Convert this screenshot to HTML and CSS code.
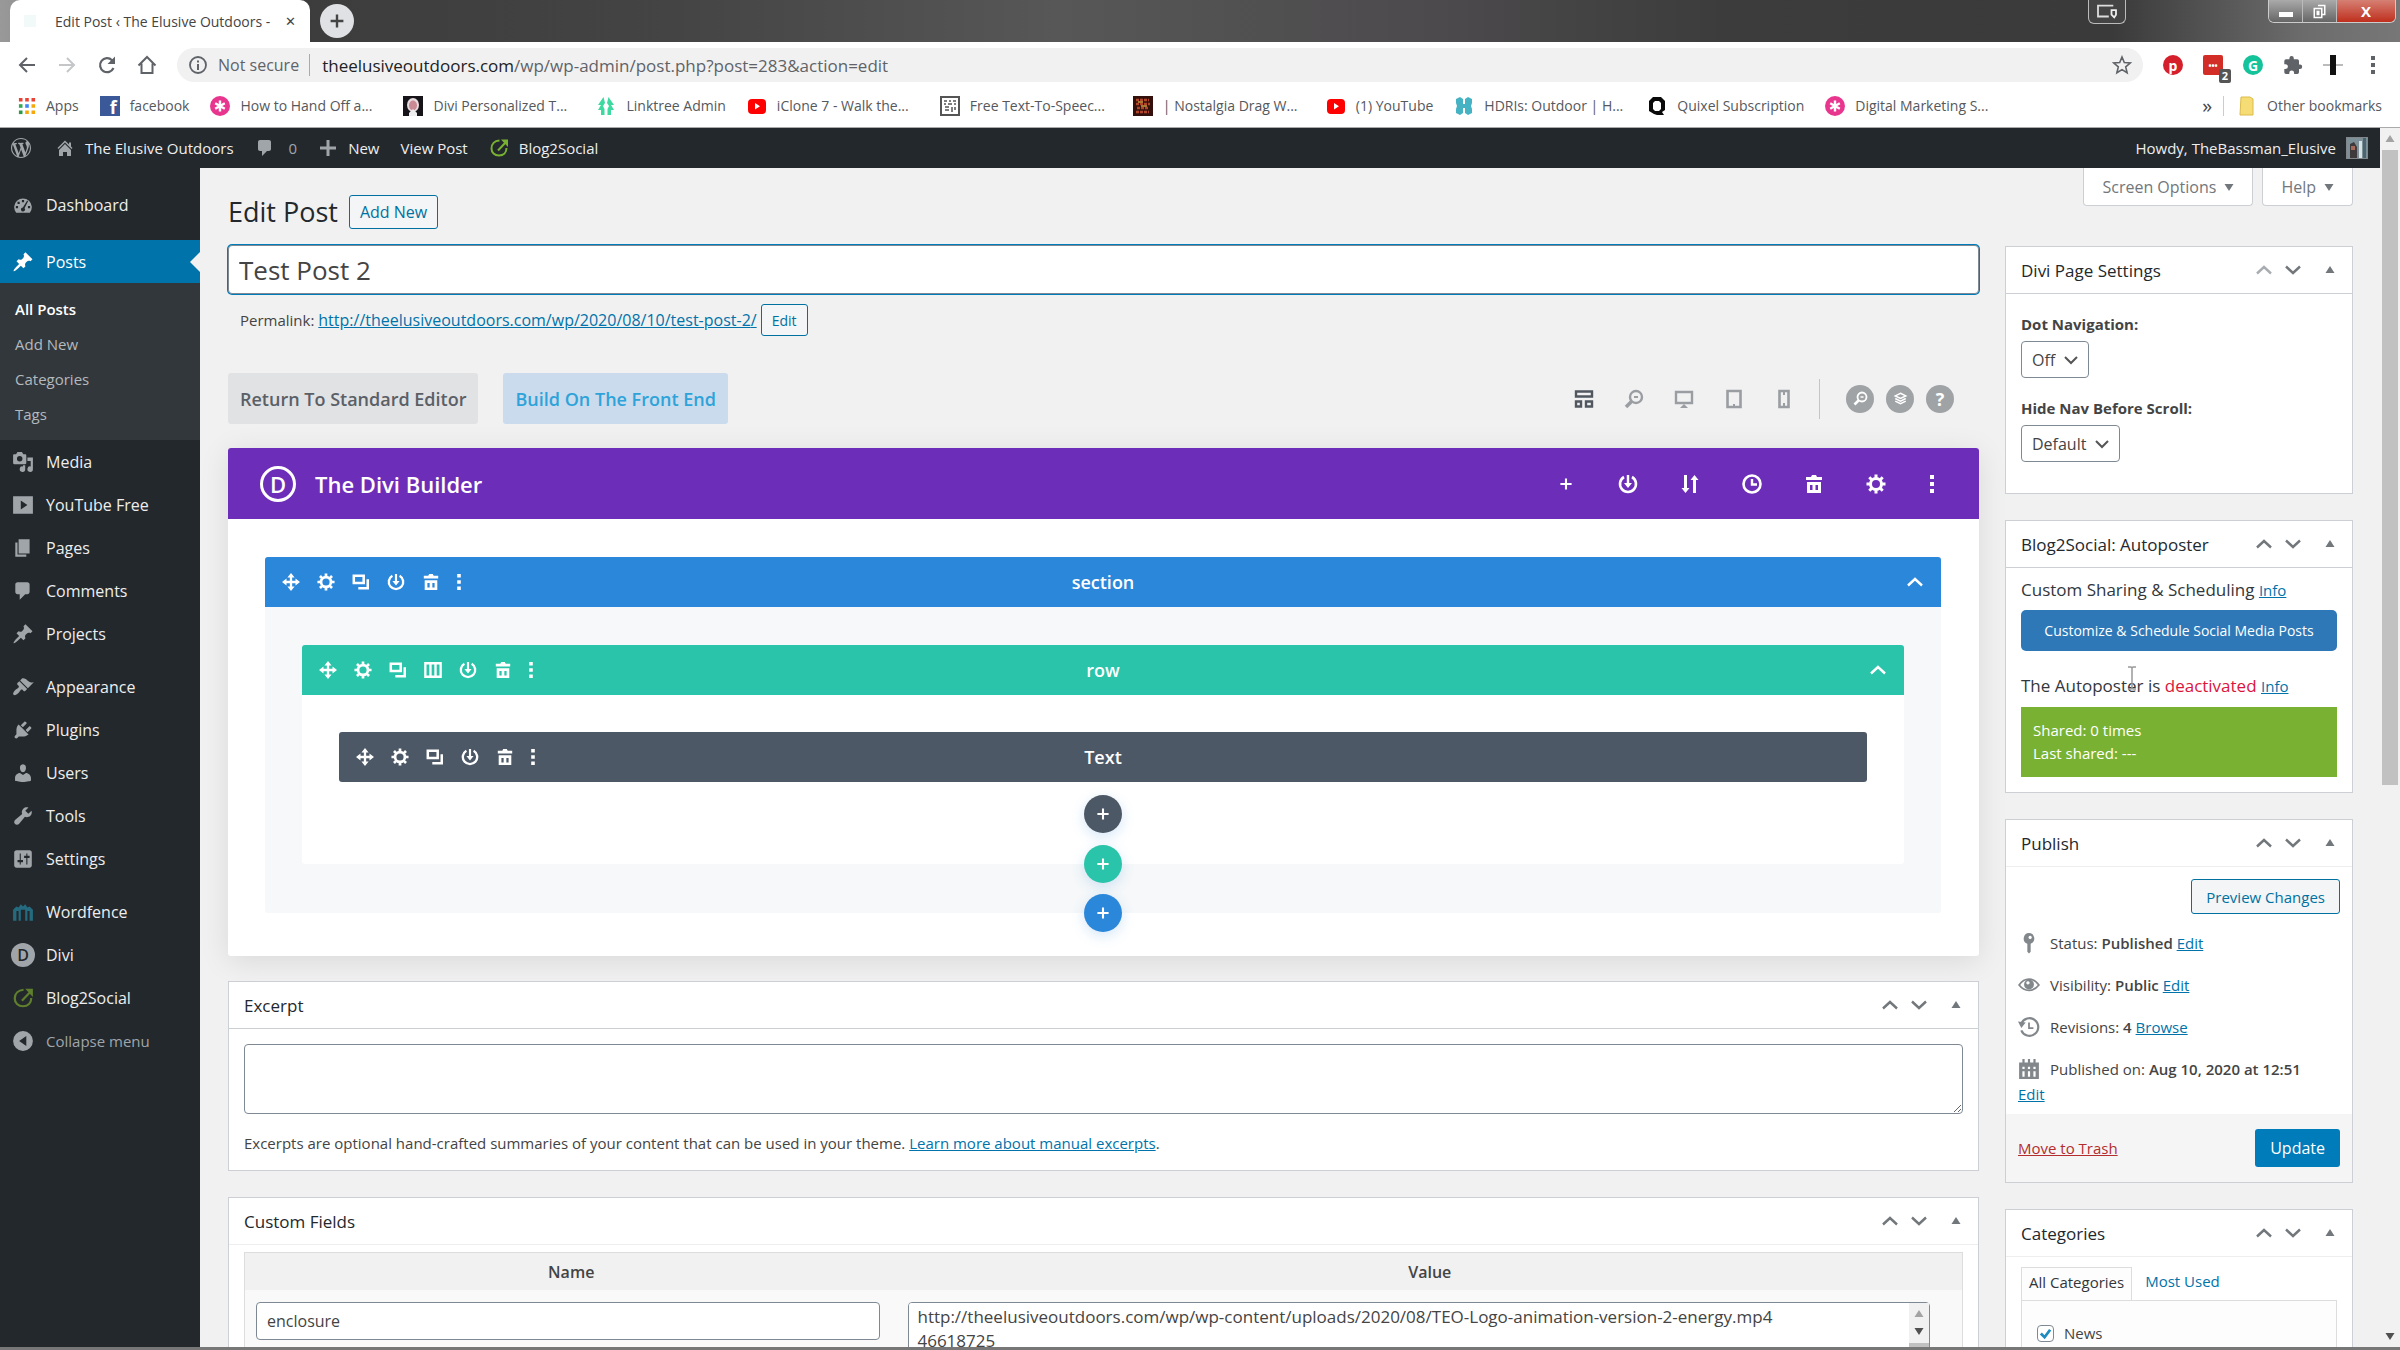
FILE: index.html
```html
<!DOCTYPE html>
<html lang="en">
<head>
    <meta charset="UTF-8">
    <meta name="viewport" content="width=device-width, initial-scale=1.0">
    <title>Edit Post ‹ The Elusive Outdoors</title>
    <link rel="stylesheet" href="styles.css">
</head>
<body>
    <!-- icon set -->
    <svg class="sprite" aria-hidden="true">
        <symbol id="i-back" viewBox="0 0 20 20"><path d="M18 10H3M10 3l-7 7 7 7" fill="none" stroke="currentColor" stroke-width="2"/></symbol>
        <symbol id="i-forward" viewBox="0 0 20 20"><path d="M2 10h15M10 3l7 7-7 7" fill="none" stroke="currentColor" stroke-width="2"/></symbol>
        <symbol id="i-reload" viewBox="0 0 20 20"><path d="M16.5 13A7 7 0 1 1 15 5.2l1.500 1.600" fill="none" stroke="currentColor" stroke-width="2.200"/><path d="M18 1.500V9h-7.500z" fill="currentColor"/></symbol>
        <symbol id="i-house" viewBox="0 0 20 20"><path d="M1.500 10.500L10 2l8.500 8.500M4.500 8.500V18h11V8.500" fill="none" stroke="currentColor" stroke-width="2"/></symbol>
        <symbol id="i-info" viewBox="0 0 20 20"><circle cx="10" cy="10" r="8" fill="none" stroke="currentColor" stroke-width="1.800"/><path d="M9 9h2v6H9zM9 5.500h2v2H9z" fill="currentColor"/></symbol>
        <symbol id="i-star" viewBox="0 0 20 20"><path d="M10 2l2.300 5.500 5.900.5-4.500 3.900 1.400 5.800L10 14.600l-5.100 3.100 1.400-5.800L1.800 8l5.900-.5z" fill="none" stroke="currentColor" stroke-width="1.600"/></symbol>
        <symbol id="i-puzzle" viewBox="0 0 20 20"><path d="M17 9.500h-1V6a1.700 1.700 0 0 0-1.700-1.700h-3.500V3.200a2.200 2.200 0 0 0-4.400 0v1.100H3A1.700 1.700 0 0 0 1.300 6v3.200h1.200a2.400 2.400 0 0 1 0 4.800H1.300v3.300A1.700 1.700 0 0 0 3 19h3.300v-1.200a2.400 2.400 0 0 1 4.800 0V19h3.200a1.700 1.700 0 0 0 1.700-1.700v-3.400h1a2.200 2.200 0 0 0 0-4.400z" fill="currentColor"/></symbol>
        <symbol id="i-dots" viewBox="0 0 6 20"><path d="M1 1h4v4H1zM1 8h4v4H1zM1 15h4v4H1z" fill="currentColor"/></symbol>
        <symbol id="i-apps" viewBox="0 0 20 20"><path d="M1 1h4v4H1zM8 1h4v4H8zM15 1h4v4h-4z" fill="#e94335"/><path d="M1 8h4v4H1z" fill="#34a853"/><path d="M8 8h4v4H8z" fill="#4285f4"/><path d="M15 8h4v4h-4zM8 15h4v4H8zM15 15h4v4h-4z" fill="#f4a80c"/><path d="M1 15h4v4H1z" fill="#2d9a48"/></symbol>
        <symbol id="i-asterisk" viewBox="0 0 20 20"><circle cx="10" cy="10" r="10" fill="#e8368f"/><path d="M10 4.500v11M5.200 7.200l9.600 5.600M14.800 7.200l-9.600 5.600" stroke="#fff" stroke-width="2.400"/></symbol>
        <symbol id="i-portrait" viewBox="0 0 20 20"><path d="M0 0h20v20H0z" fill="#161418"/><ellipse cx="10" cy="9" rx="6" ry="7" fill="#e7dcdf"/><ellipse cx="10" cy="9.500" rx="4" ry="5" fill="#c98a93"/><path d="M6 17l4-4 4 4v3H6z" fill="#eee"/></symbol>
        <symbol id="i-linktree" viewBox="0 0 20 20"><path d="M7.500 1L2 9h3l-3 5h3v5h3.500v-6L7 10l2-3zM12.500 1L18 9h-3l3 5h-3v5h-3.500v-6l1.500-3-2-3z" fill="#3ed9a0"/></symbol>
        <symbol id="i-youtube" viewBox="0 0 20 20"><rect y="3" x="1" width="18" height="15" rx="4" fill="#f00"/><path d="M8 7v6.500l5-3.200z" fill="#fff"/></symbol>
        <symbol id="i-speech" viewBox="0 0 20 20"><rect x="1" y="1" width="18" height="18" fill="#fff" stroke="#555" stroke-width="2"/><path d="M4 5h3M9 5h2M13 5h3M4 8h2M8 8h4M14 8h2M5 11h4M12 11v5M15 11v3M5 14h4" stroke="#555" stroke-width="1.500"/></symbol>
        <symbol id="i-drag" viewBox="0 0 20 20"><path d="M0 0h20v20H0z" fill="#33100c"/><path d="M3 4h13M3 8h14M4 12h12M3 16h13" stroke="#b0452a" stroke-width="2.400" stroke-dasharray="3 1"/><path d="M8 10h6M5 6h5" stroke="#c69b3c" stroke-width="1.500"/></symbol>
        <symbol id="i-hdri" viewBox="0 0 20 20"><path d="M2 3l4-2 3 2v5h2V3l3-2 4 2v4l-1 3 1 3v4l-4 2-3-2v-5H9v5l-3 2-4-2v-4l1-3-1-3z" fill="#45b3c4"/></symbol>
        <symbol id="i-quixel" viewBox="0 0 20 20"><path d="M6 1h8l4 4v9l-3 2 2 3h-7l-3-1-5-3V5zM8 5L6 7v6l2 2h4l2-2V7l-2-2z" fill="#0a0a0a" fill-rule="evenodd"/></symbol>
        <symbol id="i-folder" viewBox="0 0 20 20"><path d="M4 1h9l3 2v16H3z" fill="#f6dc74" stroke="#dcbb4b"/></symbol>
        <symbol id="i-wp" viewBox="0 0 20 20"><path fill="currentColor" d="M20 10c0-5.51-4.49-10-10-10C4.48 0 0 4.49 0 10c0 5.52 4.48 10 10 10 5.51 0 10-4.48 10-10zM7.78 15.37L4.37 6.22c.55-.02 1.17-.08 1.17-.08.5-.06.44-1.13-.06-1.11 0 0-1.45.11-2.37.11-.18 0-.37 0-.58-.01C4.12 2.69 6.87 1.11 10 1.11c2.33 0 4.45.87 6.05 2.34-.68-.11-1.65.39-1.65 1.58 0 .74.45 1.36.9 2.1.35.61.55 1.36.55 2.46 0 1.49-1.4 5-1.4 5l-3.03-8.37c.54-.02.82-.17.82-.17.5-.05.44-1.25-.06-1.22 0 0-1.44.12-2.38.12-.87 0-2.33-.12-2.33-.12-.5-.03-.56 1.2-.06 1.22l.92.08 1.26 3.41zM17.41 10c.24-.64.74-1.87.43-4.25.7 1.29 1.05 2.71 1.05 4.25 0 3.29-1.73 6.24-4.4 7.78.97-2.59 1.94-5.2 2.92-7.78zM6.1 18.09C3.12 16.65 1.11 13.53 1.11 10c0-1.3.23-2.48.72-3.59C3.25 10.3 4.67 14.2 6.1 18.09zm4.03-6.63l2.58 6.98c-.86.29-1.76.45-2.71.45-.79 0-1.57-.11-2.29-.33.81-2.38 1.62-4.74 2.42-7.1z"/></symbol>
        <symbol id="i-home" viewBox="0 0 20 20"><path fill="currentColor" d="M16 8.500l1.530 1.530-1.060 1.060L10 4.600l-6.470 6.490-1.060-1.060L10 2.500l4 4v-2h2zM10 6.040l6 5.990V18h-4v-4H8v4H4v-5.970z"/></symbol>
        <symbol id="i-comment" viewBox="0 0 20 20"><path fill="currentColor" d="M5 2h9c1.100 0 2 .9 2 2v7c0 1.100-.9 2-2 2h-2l-5 5v-5H5c-1.100 0-2-.9-2-2V4c0-1.100.9-2 2-2z"/></symbol>
        <symbol id="i-plus" viewBox="0 0 20 20"><path fill="currentColor" d="M8.500 2h3v6.500H18v3h-6.500V18h-3v-6.500H2v-3h6.500z"/></symbol>
        <symbol id="i-b2s" viewBox="0 0 20 20"><path d="M10.500 2.500C5.500 2.800 2.500 6 2.500 10.500c0 4 3 7 7.500 7s7.500-3 7.500-7.500" fill="none" stroke="currentColor" stroke-width="2"/><path d="M9 12.500l8-8.500" stroke="currentColor" stroke-width="2"/><path d="M12 1.500h7V9z" fill="currentColor"/></symbol>
        <symbol id="i-dashboard" viewBox="0 0 20 20"><path fill="currentColor" fill-rule="evenodd" d="M3.760 17A8 8 0 1 1 16.240 17zM9 5.500h2v2H9zM5 7h2v2H5zM3.500 11h2v2h-2zM14.500 11h2v2h-2zM13.800 6l.8.600-3.200 6.400a1.800 1.800 0 1 1-1.500-.7z"/></symbol>
        <symbol id="i-pin" viewBox="0 0 20 20"><path fill="currentColor" d="M10.440 3.020l1.820-1.820 6.360 6.350-1.830 1.820c-1.050-.68-2.480-.57-3.410.36l-.75.75c-.92.93-1.040 2.350-.35 3.410l-1.830 1.820-2.410-2.410-2.800 2.790c-.42.42-3.380 2.710-3.800 2.290s1.860-3.390 2.280-3.810l2.790-2.790L4.100 9.360l1.830-1.820c1.050.69 2.480.57 3.400-.36l.75-.75c.93-.92 1.050-2.350.36-3.410z"/></symbol>
        <symbol id="i-media" viewBox="0 0 20 20"><path fill="currentColor" fill-rule="evenodd" d="M13 11V4c0-.55-.45-1-1-1h-1.670L9 1H5L3.670 3H2c-.55 0-1 .45-1 1v7c0 .55.45 1 1 1h10c.55 0 1-.45 1-1zM7 4.500a2.500 2.500 0 1 1 0 5 2.500 2.500 0 0 1 0-5zM14 6h5v10.500a2.500 2.500 0 1 1-2-2.450V9h-3zM10 14.050V13h2v3.500a2.500 2.500 0 1 1-2-2.450z"/></symbol>
        <symbol id="i-video" viewBox="0 0 20 20"><path fill="currentColor" fill-rule="evenodd" d="M1 2h18v16H1zM8 6v8l6-4z"/></symbol>
        <symbol id="i-pages" viewBox="0 0 20 20"><path fill="currentColor" d="M6 15V2h10v13zm-1 1h8v2H3V5h2z"/></symbol>
        <symbol id="i-brush" viewBox="0 0 20 20"><path fill="currentColor" d="M14.480 11.060L7.410 3.990l1.500-1.500c.5-.56 2.300-.47 3.510.32 1.210.8 1.430 1.280 2.910 2.100 1.180.64 2.450 1.260 4.450.85zm-.71.71L6.700 4.700 4.930 6.470c-.39.39-.39 1.020 0 1.410l1.060 1.060c.39.39.39 1.030 0 1.420-.6.6-1.430 1.110-2.210 1.690-.35.26-.7.53-1.010.84C1.430 14.230.4 16.080 1.400 17.070c.99 1 2.840-.03 4.180-1.360.31-.31.58-.66.85-1.020.57-.78 1.080-1.610 1.690-2.210.39-.39 1.020-.39 1.410 0l1.060 1.060c.39.39 1.020.39 1.410 0z"/></symbol>
        <symbol id="i-plug" viewBox="0 0 20 20"><path fill="currentColor" d="M13.110 4.360L9.870 7.600 8 5.730l3.240-3.240c.35-.34 1.050-.2 1.560.32.52.51.66 1.210.31 1.550zm-8 1.770l.91-1.120 9.010 9.010-1.190.84c-.71.71-2.630 1.160-3.820 1.160H6.140L4.900 17.260c-.59.59-1.540.59-2.120 0-.59-.58-.59-1.530 0-2.120l1.240-1.240v-3.880c0-1.130.4-3.190 1.090-3.890zm7.260 3.970l3.240-3.240c.34-.35 1.040-.21 1.550.31.52.51.66 1.210.31 1.550l-3.240 3.250z"/></symbol>
        <symbol id="i-user" viewBox="0 0 20 20"><path fill="currentColor" d="M10 9.250c-2.270 0-2.730-3.440-2.730-3.440C7 4.020 7.820 2 9.970 2c2.160 0 2.980 2.020 2.710 3.810 0 0-.41 3.440-2.680 3.440zm0 2.570L12.720 10c2.390 0 4.520 2.330 4.520 4.530v2.490s-3.650 1.130-7.240 1.130c-3.650 0-7.240-1.130-7.240-1.130v-2.490c0-2.250 1.940-4.480 4.470-4.480z"/></symbol>
        <symbol id="i-wrench" viewBox="0 0 20 20"><path fill="currentColor" d="M16.680 9.770c-1.340 1.340-3.300 1.670-4.950.99l-5.410 6.520c-.99.99-2.590.99-3.580 0s-.99-2.590 0-3.570l6.520-5.420c-.68-1.650-.35-3.610.99-4.950 1.280-1.280 3.120-1.620 4.720-1.060l-2.890 2.890 2.820 2.820 2.860-2.870c.53 1.580.18 3.390-1.080 4.650z"/></symbol>
        <symbol id="i-sliders" viewBox="0 0 20 20"><path fill="currentColor" fill-rule="evenodd" d="M18 16V4c0-1.100-.9-2-2-2H4c-1.100 0-2 .9-2 2v12c0 1.100.9 2 2 2h12c1.100 0 2-.9 2-2zM7 5h1v6h2v2H8v2H7v-2H5v-2h2zM13 5h1v2h2v2h-2v6h-1V9h-2V7h2z"/></symbol>
        <symbol id="i-fence" viewBox="0 0 20 20"><path fill="currentColor" d="M1 8l3-3 2 1 2-3 2 2 2-2 2 3 2-1 3 3v10h-3V9h-2v9h-2V8H8v10H6V9H4v9H1z"/></symbol>
        <symbol id="i-collapse" viewBox="0 0 20 20"><path fill="currentColor" fill-rule="evenodd" d="M10 1a9 9 0 1 1 0 18 9 9 0 0 1 0-18zM13 5.500v9L6.500 10z"/></symbol>
        <symbol id="i-up" viewBox="0 0 20 20"><path d="M3 13.500L10 7l7 6.500" fill="none" stroke="currentColor" stroke-width="2.400"/></symbol>
        <symbol id="i-down" viewBox="0 0 20 20"><path d="M3 6.500l7 6.500 7-6.500" fill="none" stroke="currentColor" stroke-width="2.400"/></symbol>
        <symbol id="i-tri-up" viewBox="0 0 10 10"><path d="M5 1l4.500 7h-9z" fill="currentColor"/></symbol>
        <symbol id="i-tri-down" viewBox="0 0 10 10"><path d="M5 9L.5 2h9z" fill="currentColor"/></symbol>
        <symbol id="i-wireframe" viewBox="0 0 20 20"><path d="M2 2.500h16v5H2zM2 12.500h5v5H2zM12 12.500h6v5h-6z" fill="none" stroke="currentColor" stroke-width="2.400"/></symbol>
        <symbol id="i-zoom" viewBox="0 0 20 20"><circle cx="12" cy="8" r="6" fill="none" stroke="currentColor" stroke-width="2.400"/><path d="M7.500 12.500L2 18" stroke="currentColor" stroke-width="3.500"/><path d="M10 7h4v2h-4z" fill="currentColor"/></symbol>
        <symbol id="i-desktop" viewBox="0 0 20 20"><path d="M2 3h16v11H2z" fill="none" stroke="currentColor" stroke-width="2.400"/><path d="M10 15l4 4H6z" fill="currentColor"/></symbol>
        <symbol id="i-tablet" viewBox="0 0 20 20"><path d="M3.500 2h13v16h-13z" fill="none" stroke="currentColor" stroke-width="2.600"/><path d="M9 15h2v3H9z" fill="currentColor"/></symbol>
        <symbol id="i-phone" viewBox="0 0 20 20"><path d="M5.500 2h9v16h-9z" fill="none" stroke="currentColor" stroke-width="2.600"/><path d="M9 3h2v3H9zM9 14h2v3H9z" fill="currentColor"/></symbol>
        <symbol id="i-layers" viewBox="0 0 20 20"><path d="M10 3l7 3.500-7 3.500-7-3.500zM3 10l7 3.500 7-3.500M3 13.500l7 3.500 7-3.500" fill="none" stroke="currentColor" stroke-width="2"/></symbol>
        <symbol id="i-power" viewBox="0 0 20 20"><path d="M6 3a8 8 0 1 0 8 0" fill="none" stroke="currentColor" stroke-width="2.600"/><path d="M8.800 1h2.400v8H14l-4 5-4-5h2.800z" fill="currentColor"/></symbol>
        <symbol id="i-sort" viewBox="0 0 20 20"><path d="M4 1h3v13h2.500L5.500 19l-4-5H4zM13 19h3V6h2.500l-4-5-4 5H13z" fill="currentColor"/></symbol>
        <symbol id="i-clock" viewBox="0 0 20 20"><circle cx="10" cy="10" r="8.500" fill="none" stroke="currentColor" stroke-width="2.600"/><path d="M10 5v5.500h5" fill="none" stroke="currentColor" stroke-width="2.400"/></symbol>
        <symbol id="i-trash" viewBox="0 0 20 20"><path fill="currentColor" fill-rule="evenodd" d="M8 1h4l1 2h5v3H2V3h5zM3 8h14v11H3zM6 11v5h2.500v-5zM11.500 11v5H14v-5z"/></symbol>
        <symbol id="i-gear" viewBox="0 0 20 20"><circle cx="10" cy="10" r="5.500" fill="none" stroke="currentColor" stroke-width="3"/><path d="M10 .5V4M10 16v3.500M.5 10H4M16 10h3.500M3.300 3.300l2.400 2.400M14.300 14.300l2.400 2.400M16.700 3.300l-2.400 2.400M5.700 14.300l-2.400 2.400" stroke="currentColor" stroke-width="3"/></symbol>
        <symbol id="i-move" viewBox="0 0 20 20"><path fill="currentColor" d="M10 0l4 5h-2.700v3.700H15V6l5 4-5 4v-2.700h-3.700V15H14l-4 5-4-5h2.700v-3.700H5V14l-5-4 5-4v2.700h3.700V5H6z"/></symbol>
        <symbol id="i-copy" viewBox="0 0 20 20"><path d="M2 3h11v8H2zM17.500 7v10H7" fill="none" stroke="currentColor" stroke-width="2.800"/></symbol>
        <symbol id="i-columns" viewBox="0 0 20 20"><path d="M1.500 2.500h17v15h-17zM7.200 2v16M12.800 2v16" fill="none" stroke="currentColor" stroke-width="2.600"/></symbol>
        <symbol id="i-status" viewBox="0 0 20 20"><path fill="currentColor" fill-rule="evenodd" d="M10 1a5 5 0 0 1 1.500 9.700V18L10 19.500 8.500 18v-7.300A5 5 0 0 1 10 1zM11 3.500a1.500 1.500 0 1 0 .1 0z"/></symbol>
        <symbol id="i-eye" viewBox="0 0 20 20"><path d="M1 10c5-7 13-7 18 0-5 6.500-13 6.500-18 0z" fill="none" stroke="currentColor" stroke-width="1.600"/><path fill="currentColor" fill-rule="evenodd" d="M10 5a4.500 4.500 0 1 1 0 9 4.500 4.500 0 0 1 0-9zM9 6.500a1.500 1.500 0 1 0 .1 0z"/></symbol>
        <symbol id="i-revisions" viewBox="0 0 20 20"><path d="M3 7a8 8 0 1 1 0 6" fill="none" stroke="currentColor" stroke-width="2"/><path d="M0 5l7 1-4 5z" fill="currentColor"/><path d="M10 6v5h4" fill="none" stroke="currentColor" stroke-width="1.600"/></symbol>
        <symbol id="i-calendar" viewBox="0 0 20 20"><path fill="currentColor" fill-rule="evenodd" d="M1 4h3V1h2v3h3V1h2v3h3V1h2v3h3v15H1zM4 8v2h2V8zM9 8v2h2V8zM14 8v2h2V8zM4 12v5h2v-5zM9 12v5h2v-5zM14 12v5h2v-5z"/></symbol>
    </svg>

    <!-- browser window -->
    <header class="browser">
        <div class="titlebar">
            <div class="tab">
                <span class="tab-icon"></span>
                <span class="tab-title">Edit Post ‹ The Elusive Outdoors -</span>
                <button class="tab-close" aria-label="Close tab">✕</button>
            </div>
            <button class="new-tab" aria-label="New tab"><svg class="icon"><use href="#i-plus"/></svg></button>
            <div class="window-controls">
                <button class="capture" aria-label="Capture"><svg viewBox="0 0 30 20"><path d="M4 3h18M5 3v12h12" fill="none" stroke="#ddd" stroke-width="2"/><path d="M20 8h5v5l-2 3-3-3z" fill="#444" stroke="#eee" stroke-width="2"/></svg></button>
                <div class="window-buttons">
                    <button class="win-min" aria-label="Minimize"></button>
                    <button class="win-restore" aria-label="Restore"><svg viewBox="0 0 20 20"><path d="M8 2h9v12h-3M3 6h10v12H3zM7 10h2v4H7z" fill="none" stroke="#fff" stroke-width="2"/></svg></button>
                    <button class="win-close" aria-label="Close">X</button>
                </div>
            </div>
        </div>

        <div class="navbar">
            <button class="nav-button" aria-label="Back"><svg class="icon"><use href="#i-back"/></svg></button>
            <button class="nav-button disabled" aria-label="Forward"><svg class="icon"><use href="#i-forward"/></svg></button>
            <button class="nav-button" aria-label="Reload"><svg class="icon"><use href="#i-reload"/></svg></button>
            <button class="nav-button" aria-label="Home"><svg class="icon"><use href="#i-house"/></svg></button>
            <div class="address">
                <svg class="icon"><use href="#i-info"/></svg>
                <span class="secure">Not secure</span>
                <span class="url"><b>theelusiveoutdoors.com</b>/wp/wp-admin/post.php?post=283&amp;action=edit</span>
                <svg class="icon"><use href="#i-star"/></svg>
            </div>
            <div class="extensions">
                <span class="ext pinterest">p</span>
                <span class="ext lastpass">•••<span class="ext-count">2</span></span>
                <span class="ext grammarly">G</span>
                <svg class="icon"><use href="#i-puzzle"/></svg>
                <svg class="icon profile" viewBox="0 0 20 20"><path d="M0 10h20" stroke="#bbb" stroke-width="2"/><path d="M7 0h6v20H7z" fill="#111"/></svg>
                <svg class="icon"><use href="#i-dots"/></svg>
            </div>
        </div>

        <nav class="bookmarks">
            <a href="#"><svg class="icon apps"><use href="#i-apps"/></svg><span>Apps</span></a>
            <a href="#"><span class="facebook">f</span><span>facebook</span></a>
            <a href="#" class="long"><svg class="icon"><use href="#i-asterisk"/></svg><span>How to Hand Off a...</span></a>
            <a href="#" class="long"><svg class="icon"><use href="#i-portrait"/></svg><span>Divi Personalized T...</span></a>
            <a href="#"><svg class="icon"><use href="#i-linktree"/></svg><span>Linktree Admin</span></a>
            <a href="#" class="long"><svg class="icon"><use href="#i-youtube"/></svg><span>iClone 7 - Walk the...</span></a>
            <a href="#" class="long"><svg class="icon"><use href="#i-speech"/></svg><span>Free Text-To-Speec...</span></a>
            <a href="#" class="long"><svg class="icon"><use href="#i-drag"/></svg><span>| Nostalgia Drag W...</span></a>
            <a href="#"><svg class="icon"><use href="#i-youtube"/></svg><span>(1) YouTube</span></a>
            <a href="#" class="long"><svg class="icon"><use href="#i-hdri"/></svg><span>HDRIs: Outdoor | H...</span></a>
            <a href="#"><svg class="icon"><use href="#i-quixel"/></svg><span>Quixel Subscription</span></a>
            <a href="#" class="long"><svg class="icon"><use href="#i-asterisk"/></svg><span>Digital Marketing S...</span></a>
            <button class="more" aria-label="More bookmarks">»</button>
            <a href="#" class="other"><svg class="icon"><use href="#i-folder"/></svg><span>Other bookmarks</span></a>
        </nav>
    </header>

    <div class="viewport">
        <div class="page">
            <nav class="adminbar">
                <a href="#" aria-label="About WordPress"><svg class="icon"><use href="#i-wp"/></svg></a>
                <a href="#" class="site"><svg class="icon"><use href="#i-home"/></svg>The Elusive Outdoors</a>
                <a href="#" class="count"><svg class="icon"><use href="#i-comment"/></svg><span>0</span></a>
                <a href="#"><svg class="icon"><use href="#i-plus"/></svg>New</a>
                <a href="#">View Post</a>
                <a href="#"><svg class="icon green"><use href="#i-b2s"/></svg>Blog2Social</a>
                <a href="#" class="account">Howdy, TheBassman_Elusive
                    <svg class="avatar" viewBox="0 0 20 20"><path d="M0 0h20v20H0z" fill="#7d9098"/><path d="M3 20V6l4-2 3 5v11z" fill="#3f3a3b"/><path d="M12 20V3h3v17z" fill="#d7e2e6"/><path d="M16 0h3v20h-3z" fill="#4c6470"/><path d="M4 8h4v4H4z" fill="#a66a5c"/></svg>
                </a>
            </nav>

            <div class="layout">
                <nav class="adminmenu">
                    <a href="#"><svg class="icon"><use href="#i-dashboard"/></svg>Dashboard</a>
                    <a href="#" class="current"><svg class="icon"><use href="#i-pin"/></svg>Posts</a>
                    <div class="submenu">
                        <a href="#" class="active">All Posts</a>
                        <a href="#">Add New</a>
                        <a href="#">Categories</a>
                        <a href="#">Tags</a>
                    </div>
                    <a href="#"><svg class="icon"><use href="#i-media"/></svg>Media</a>
                    <a href="#"><svg class="icon"><use href="#i-video"/></svg>YouTube Free</a>
                    <a href="#"><svg class="icon"><use href="#i-pages"/></svg>Pages</a>
                    <a href="#"><svg class="icon"><use href="#i-comment"/></svg>Comments</a>
                    <a href="#"><svg class="icon"><use href="#i-pin"/></svg>Projects</a>
                    <a href="#" class="group"><svg class="icon"><use href="#i-brush"/></svg>Appearance</a>
                    <a href="#"><svg class="icon"><use href="#i-plug"/></svg>Plugins</a>
                    <a href="#"><svg class="icon"><use href="#i-user"/></svg>Users</a>
                    <a href="#"><svg class="icon"><use href="#i-wrench"/></svg>Tools</a>
                    <a href="#"><svg class="icon"><use href="#i-sliders"/></svg>Settings</a>
                    <a href="#" class="group"><svg class="icon teal"><use href="#i-fence"/></svg>Wordfence</a>
                    <a href="#"><span class="divi-mark">D</span>Divi</a>
                    <a href="#"><svg class="icon olive"><use href="#i-b2s"/></svg>Blog2Social</a>
                    <button class="collapse"><svg class="icon"><use href="#i-collapse"/></svg>Collapse menu</button>
                </nav>

                <main class="content">
                    <div class="heading">
                        <h1>Edit Post</h1>
                        <a href="#" class="button">Add New</a>
                        <div class="screen-meta">
                            <button>Screen Options <svg><use href="#i-tri-down"/></svg></button>
                            <button>Help <svg><use href="#i-tri-down"/></svg></button>
                        </div>
                    </div>

                    <div class="columns">
                        <div class="main-column">
                            <input type="text" class="post-title" value="Test Post 2" aria-label="Post title">
                            <div class="permalink">
                                <span>Permalink: <a href="#">http://theelusiveoutdoors.com/wp/2020/08/10/<b>test-post-2</b>/</a></span>
                                <button class="button small">Edit</button>
                            </div>

                            <div class="divi-bar">
                                <button class="divi-button">Return To Standard Editor</button>
                                <button class="divi-button blue">Build On The Front End</button>
                                <div class="views">
                                    <button class="on" aria-label="Wireframe view"><svg class="icon"><use href="#i-wireframe"/></svg></button>
                                    <button aria-label="Zoom out view"><svg class="icon"><use href="#i-zoom"/></svg></button>
                                    <button aria-label="Desktop view"><svg class="icon"><use href="#i-desktop"/></svg></button>
                                    <button aria-label="Tablet view"><svg class="icon"><use href="#i-tablet"/></svg></button>
                                    <button aria-label="Phone view"><svg class="icon"><use href="#i-phone"/></svg></button>
                                </div>
                                <div class="helpers">
                                    <button aria-label="Search"><svg class="icon"><use href="#i-zoom"/></svg></button>
                                    <button aria-label="Layers"><svg class="icon"><use href="#i-layers"/></svg></button>
                                    <button aria-label="Help">?</button>
                                </div>
                            </div>

                            <section class="builder">
                                <div class="builder-head">
                                    <span class="divi-logo">D</span>
                                    <h2>The Divi Builder</h2>
                                    <div class="builder-tools">
                                        <button aria-label="Add from library"><svg class="icon thin"><use href="#i-plus"/></svg></button>
                                        <button aria-label="Save to library"><svg class="icon"><use href="#i-power"/></svg></button>
                                        <button aria-label="Portability"><svg class="icon"><use href="#i-sort"/></svg></button>
                                        <button aria-label="History"><svg class="icon"><use href="#i-clock"/></svg></button>
                                        <button aria-label="Clear layout"><svg class="icon"><use href="#i-trash"/></svg></button>
                                        <button aria-label="Settings"><svg class="icon"><use href="#i-gear"/></svg></button>
                                        <button aria-label="More"><svg class="icon dots"><use href="#i-dots"/></svg></button>
                                    </div>
                                </div>
                                <div class="builder-body">
                                    <div class="block section">
                                        <div class="block-head">
                                            <div class="tools">
                                                <button aria-label="Move"><svg class="icon"><use href="#i-move"/></svg></button>
                                                <button aria-label="Settings"><svg class="icon"><use href="#i-gear"/></svg></button>
                                                <button aria-label="Duplicate"><svg class="icon"><use href="#i-copy"/></svg></button>
                                                <button aria-label="Save"><svg class="icon"><use href="#i-power"/></svg></button>
                                                <button aria-label="Delete"><svg class="icon"><use href="#i-trash"/></svg></button>
                                                <button aria-label="More"><svg class="icon dots"><use href="#i-dots"/></svg></button>
                                            </div>
                                            <span>section</span>
                                            <button class="toggle" aria-label="Collapse section"><svg class="icon"><use href="#i-up"/></svg></button>
                                        </div>
                                        <div class="block row">
                                            <div class="block-head">
                                                <div class="tools">
                                                    <button aria-label="Move"><svg class="icon"><use href="#i-move"/></svg></button>
                                                    <button aria-label="Settings"><svg class="icon"><use href="#i-gear"/></svg></button>
                                                    <button aria-label="Duplicate"><svg class="icon"><use href="#i-copy"/></svg></button>
                                                    <button aria-label="Columns"><svg class="icon"><use href="#i-columns"/></svg></button>
                                                    <button aria-label="Save"><svg class="icon"><use href="#i-power"/></svg></button>
                                                    <button aria-label="Delete"><svg class="icon"><use href="#i-trash"/></svg></button>
                                                    <button aria-label="More"><svg class="icon dots"><use href="#i-dots"/></svg></button>
                                                </div>
                                                <span>row</span>
                                                <button class="toggle" aria-label="Collapse row"><svg class="icon"><use href="#i-up"/></svg></button>
                                            </div>
                                            <div class="module">
                                                <div class="block-head">
                                                    <div class="tools">
                                                        <button aria-label="Move"><svg class="icon"><use href="#i-move"/></svg></button>
                                                        <button aria-label="Settings"><svg class="icon"><use href="#i-gear"/></svg></button>
                                                        <button aria-label="Duplicate"><svg class="icon"><use href="#i-copy"/></svg></button>
                                                        <button aria-label="Save"><svg class="icon"><use href="#i-power"/></svg></button>
                                                        <button aria-label="Delete"><svg class="icon"><use href="#i-trash"/></svg></button>
                                                        <button aria-label="More"><svg class="icon dots"><use href="#i-dots"/></svg></button>
                                                    </div>
                                                    <span>Text</span>
                                                </div>
                                            </div>
                                            <button class="add add-module" aria-label="Add module"><svg class="icon"><use href="#i-plus"/></svg></button>
                                            <button class="add add-row" aria-label="Add row"><svg class="icon"><use href="#i-plus"/></svg></button>
                                        </div>
                                        <button class="add add-section" aria-label="Add section"><svg class="icon"><use href="#i-plus"/></svg></button>
                                    </div>
                                </div>
                            </section>

                            <section class="box">
                                <div class="box-head">
                                    <h2>Excerpt</h2>
                                    <button aria-label="Move up"><svg class="icon"><use href="#i-up"/></svg></button>
                                    <button aria-label="Move down"><svg class="icon"><use href="#i-down"/></svg></button>
                                    <button class="fold" aria-label="Toggle panel"><svg><use href="#i-tri-up"/></svg></button>
                                </div>
                                <div class="box-body excerpt">
                                    <textarea aria-label="Excerpt"></textarea>
                                    <p>Excerpts are optional hand-crafted summaries of your content that can be used in your theme. <a href="#">Learn more about manual excerpts</a>.</p>
                                </div>
                            </section>

                            <section class="box">
                                <div class="box-head light">
                                    <h2>Custom Fields</h2>
                                    <button aria-label="Move up"><svg class="icon"><use href="#i-up"/></svg></button>
                                    <button aria-label="Move down"><svg class="icon"><use href="#i-down"/></svg></button>
                                    <button class="fold" aria-label="Toggle panel"><svg><use href="#i-tri-up"/></svg></button>
                                </div>
                                <div class="box-body fields">
                                    <table>
                                        <thead>
                                            <tr><th class="name">Name</th><th>Value</th></tr>
                                        </thead>
                                        <tbody>
                                            <tr>
                                                <td><input type="text" value="enclosure" aria-label="Name"></td>
                                                <td>
                                                    <div class="value">
                                                        <textarea aria-label="Value">http://theelusiveoutdoors.com/wp/wp-content/uploads/2020/08/TEO-Logo-animation-version-2-energy.mp4
46618725
video/mp4
</textarea>
                                                        <div class="value-scroll">
                                                            <svg class="faint"><use href="#i-tri-up"/></svg>
                                                            <svg><use href="#i-tri-down"/></svg>
                                                            <div class="value-thumb"></div>
                                                        </div>
                                                    </div>
                                                </td>
                                            </tr>
                                        </tbody>
                                    </table>
                                </div>
                            </section>
                        </div>

                        <aside class="side-column">
                            <section class="box">
                                <div class="box-head">
                                    <h2>Divi Page Settings</h2>
                                    <button class="faded" aria-label="Move up"><svg class="icon"><use href="#i-up"/></svg></button>
                                    <button aria-label="Move down"><svg class="icon"><use href="#i-down"/></svg></button>
                                    <button class="fold" aria-label="Toggle panel"><svg><use href="#i-tri-up"/></svg></button>
                                </div>
                                <div class="box-body settings">
                                    <label for="dot-nav">Dot Navigation:</label>
                                    <select id="dot-nav"><option>Off</option></select>
                                    <label for="hide-nav">Hide Nav Before Scroll:</label>
                                    <select id="hide-nav"><option>Default</option></select>
                                </div>
                            </section>

                            <section class="box">
                                <div class="box-head">
                                    <h2>Blog2Social: Autoposter</h2>
                                    <button aria-label="Move up"><svg class="icon"><use href="#i-up"/></svg></button>
                                    <button aria-label="Move down"><svg class="icon"><use href="#i-down"/></svg></button>
                                    <button class="fold" aria-label="Toggle panel"><svg><use href="#i-tri-up"/></svg></button>
                                </div>
                                <div class="box-body b2s">
                                    <p><strong>Custom Sharing &amp; Scheduling</strong> <a href="#">Info</a></p>
                                    <button class="b2s-button">Customize &amp; Schedule Social Media Posts</button>
                                    <p><strong>The Autoposter is <span class="red">deactivated</span></strong> <a href="#">Info</a></p>
                                    <div class="shared">Shared: 0 times<br>Last shared: ---</div>
                                    <svg class="cursor" viewBox="0 0 10 24"><path d="M1 1h3l1 1 1-1h3M5 2v20M1 23h3l1-1 1 1h3" fill="none" stroke="#999" stroke-width="1.500"/></svg>
                                </div>
                            </section>

                            <section class="box">
                                <div class="box-head light">
                                    <h2>Publish</h2>
                                    <button aria-label="Move up"><svg class="icon"><use href="#i-up"/></svg></button>
                                    <button aria-label="Move down"><svg class="icon"><use href="#i-down"/></svg></button>
                                    <button class="fold" aria-label="Toggle panel"><svg><use href="#i-tri-up"/></svg></button>
                                </div>
                                <div class="box-body publish">
                                    <button class="button preview">Preview Changes</button>
                                    <p><svg class="icon"><use href="#i-status"/></svg>Status: <strong>Published</strong> <a href="#">Edit</a></p>
                                    <p><svg class="icon"><use href="#i-eye"/></svg>Visibility: <strong>Public</strong> <a href="#">Edit</a></p>
                                    <p><svg class="icon"><use href="#i-revisions"/></svg>Revisions: <strong>4</strong> <a href="#">Browse</a></p>
                                    <p><svg class="icon"><use href="#i-calendar"/></svg>Published on: <strong>Aug 10, 2020 at 12:51</strong> <a href="#">Edit</a></p>
                                </div>
                                <div class="publish-actions">
                                    <a href="#" class="trash">Move to Trash</a>
                                    <button class="update">Update</button>
                                </div>
                            </section>

                            <section class="box">
                                <div class="box-head light">
                                    <h2>Categories</h2>
                                    <button aria-label="Move up"><svg class="icon"><use href="#i-up"/></svg></button>
                                    <button aria-label="Move down"><svg class="icon"><use href="#i-down"/></svg></button>
                                    <button class="fold" aria-label="Toggle panel"><svg><use href="#i-tri-up"/></svg></button>
                                </div>
                                <div class="box-body categories">
                                    <div class="tabs">
                                        <a href="#" class="selected">All Categories</a>
                                        <a href="#">Most Used</a>
                                    </div>
                                    <div class="tab-panel">
                                        <label><input type="checkbox" checked> News</label>
                                    </div>
                                </div>
                            </section>
                        </aside>
                    </div>
                </main>
            </div>
        </div>
        <div class="scrollbar">
            <svg class="faint"><use href="#i-tri-up"/></svg>
            <div class="track"><div class="thumb"></div></div>
            <svg><use href="#i-tri-down"/></svg>
        </div>
    </div>
</body>
</html>
```
FILE: styles.css
```css
*{
    box-sizing: border-box;
}
body{
    margin: 0;
    height: 100vh;
    display: flex;
    flex-direction: column;
    overflow: hidden;
    font-family: "Open Sans", "Noto Sans", sans-serif;
    font-size: 15px;
    color: #444;
    background-color: #fff;
    border-bottom: 3px solid #777;
}
h1, h2, p{
    margin: 0;
}
button, input, select, textarea{
    font-family: inherit;
    font-size: inherit;
    color: inherit;
}
button{
    padding: 0;
    border: none;
    background: none;
}
a{
    color: #0073aa;
}
.sprite{
    display: none;
}
.icon{
    width: 20px;
    height: 20px;
    flex: none;
    display: block;
}

/* browser */
.browser{
    flex: none;
    height: 128px;
    display: flex;
    flex-direction: column;
    border-bottom: 1px solid #aaa;
}
.titlebar{
    flex: none;
    height: 42px;
    display: flex;
    align-items: flex-start;
    padding-left: 10px;
    background: linear-gradient(90deg, #999, #3c3c3c 12%, #444 28%, #575757 44%, #4c4a4c 60%, #3c3c3c 72%, #3a3a3a 88%, #6c6c6c 96%, #777);
}
.tab{
    width: 300px;
    height: 42px;
    display: flex;
    align-items: center;
    padding: 0 14px;
    background-color: #fff;
    border-radius: 10px 10px 0 0;
    font-size: 14px;
}
.tab-icon{
    width: 12px;
    height: 12px;
    margin-right: 19px;
    background-color: #f2faf9;
}
.tab-title{
    flex: 1;
    overflow: hidden;
    white-space: nowrap;
}
.tab-close{
    width: 12px;
    font-size: 13px;
}
.new-tab{
    width: 34px;
    height: 34px;
    margin: 4px 0 0 10px;
    display: flex;
    align-items: center;
    justify-content: center;
    border-radius: 50%;
    background-color: #dfe1e4;
}
.new-tab .icon{
    width: 16px;
    height: 16px;
}
.window-controls{
    margin-left: auto;
    display: flex;
    padding-right: 4px;
    gap: 142px;
}
.capture{
    width: 38px;
    height: 24px;
    padding: 3px;
    border: 1px solid #bbb;
    border-top: none;
    border-radius: 0 0 6px 6px;
    background-color: #444;
}
.capture svg{
    width: 30px;
    height: 18px;
}
.window-buttons{
    display: flex;
    height: 23px;
    border: 1px solid #ccc;
    border-top: none;
    border-radius: 0 0 6px 6px;
    overflow: hidden;
}
.window-buttons button{
    width: 34px;
    display: flex;
    align-items: center;
    justify-content: center;
    border-right: 1px solid #bbb;
    background: linear-gradient(#aaa, #666);
}
.window-buttons .win-close{
    width: 58px;
    border: none;
    color: #fff;
    font-weight: 700;
    background: linear-gradient(#d58074, #bf2f1d);
}
.win-min::before{
    content: "";
    width: 14px;
    height: 5px;
    margin-top: 6px;
    background-color: #fff;
}
.win-restore svg{
    width: 15px;
    height: 15px;
}
.navbar{
    flex: none;
    height: 46px;
    display: flex;
    align-items: center;
    gap: 20px;
    padding: 0 17px;
    color: #5f6368;
}
.disabled{
    color: #c4c6c8;
}
.address{
    flex: 1;
    height: 34px;
    display: flex;
    align-items: center;
    padding: 0 11px;
    border-radius: 17px;
    background-color: #f1f1f2;
    font-size: 17px;
}
.secure{
    margin-left: 10px;
    padding-right: 10px;
    border-right: 1px solid #aaa;
    font-size: 16px;
}
.url{
    flex: 1;
    margin-left: 12px;
}
.url b{
    font-weight: 400;
    color: #202124;
}
.extensions{
    display: flex;
    align-items: center;
    gap: 20px;
}
.ext{
    width: 20px;
    height: 20px;
    position: relative;
    display: flex;
    align-items: center;
    justify-content: center;
    border-radius: 50%;
    color: #fff;
    font-size: 14px;
    font-weight: 700;
}
.pinterest{
    background-color: #d5202c;
}
.lastpass{
    border-radius: 2px;
    background-color: #d32d27;
    font-size: 8px;
}
.grammarly{
    background-color: #15c39a;
}
.ext-count{
    position: absolute;
    right: -8px;
    bottom: -8px;
    padding: 0 3px;
    border-radius: 2px;
    background-color: #555;
    font-size: 11px;
    line-height: 14px;
}
.bookmarks{
    flex: 1;
    display: flex;
    align-items: center;
    gap: 21px;
    padding: 0 18px 4px 18px;
    font-size: 14px;
}
.bookmarks a{
    display: flex;
    align-items: center;
    gap: 10px;
    color: #55585c;
    text-decoration: none;
    white-space: nowrap;
}
.bookmarks .long span{
    width: 142px;
}
.bookmarks .apps{
    width: 18px;
    height: 18px;
}
.facebook{
    width: 20px;
    height: 20px;
    padding-right: 3px;
    background-color: #3b5998;
    color: #fff;
    font-size: 18px;
    font-weight: 700;
    line-height: 22px;
    text-align: right;
}
.more{
    margin-left: auto;
    font-size: 20px;
}
.bookmarks .other{
    margin-left: -10px;
    padding-left: 13px;
    border-left: 1px solid #ccc;
}

/* viewport */
.viewport{
    flex: 1;
    min-height: 0;
    display: flex;
}
.page{
    flex: 1;
    min-width: 0;
    display: flex;
    flex-direction: column;
    overflow: hidden;
    background-color: #f1f1f1;
}
.scrollbar{
    width: 20px;
    display: flex;
    flex-direction: column;
    align-items: center;
    padding: 6px 2px;
    background-color: #f1f1f1;
}
.scrollbar svg, .value-scroll svg{
    width: 10px;
    height: 10px;
    color: #505050;
}
.scrollbar .faint, .value-scroll .faint{
    color: #a3a3a3;
}
.track{
    flex: 1;
    width: 100%;
    padding: 6px 0;
}
.thumb{
    height: 54%;
    background-color: #c1c1c1;
}

/* admin bar */
.adminbar{
    flex: none;
    height: 40px;
    display: flex;
    align-items: center;
    gap: 21px;
    padding: 0 12px 0 11px;
    background-color: #23282d;
}
.adminbar a{
    display: flex;
    align-items: center;
    gap: 10px;
    color: #eee;
    text-decoration: none;
}
.adminbar .icon{
    color: #a0a5aa;
}
.adminbar .site{
    margin-left: 3px;
}
.adminbar .count span{
    padding-left: 4px;
    color: #a0a5aa;
}
.adminbar .green{
    color: #79b232;
}
.adminbar .account{
    margin-left: auto;
}
.avatar{
    width: 22px;
    height: 22px;
    border: 1px solid #82878c;
}

/* admin menu */
.layout{
    flex: 1;
    min-height: 0;
    display: flex;
}
.adminmenu{
    flex: none;
    width: 200px;
    padding-top: 15px;
    background-color: #23282d;
    font-size: 16px;
}
.adminmenu a, .collapse{
    height: 43px;
    display: flex;
    align-items: center;
    gap: 12px;
    padding-left: 12px;
    color: #eee;
    text-decoration: none;
}
.adminmenu .icon{
    width: 22px;
    height: 22px;
    color: #a0a5aa;
}
.adminmenu .group{
    margin-top: 10px;
}
.adminmenu .current{
    position: relative;
    margin-top: 14px;
    color: #fff;
    background-color: #0073aa;
}
.adminmenu .current .icon{
    color: #fff;
}
.current::after{
    content: "";
    position: absolute;
    right: 0;
    top: 50%;
    margin-top: -10px;
    border: 10px solid transparent;
    border-left: none;
    border-right-color: #f1f1f1;
}
.submenu{
    padding: 8px 0 9px;
    background-color: #32373c;
    font-size: 15px;
}
.submenu a{
    height: 35px;
    padding-left: 15px;
    color: #b4b9be;
}
.submenu .active{
    color: #fff;
    font-weight: 600;
}
.adminmenu .teal{
    color: #256b80;
}
.adminmenu .olive{
    color: #5f7f2d;
}
.divi-mark{
    width: 24px;
    height: 24px;
    margin: 0 -1px;
    border-radius: 50%;
    background-color: #a0a5aa;
    color: #23282d;
    font-weight: 600;
    line-height: 24px;
    text-align: center;
}
.adminmenu .collapse{
    width: 100%;
    color: #a0a5aa;
    font-size: 15px;
}

/* content */
.content{
    flex: 1;
    min-width: 0;
    padding: 0 27px 0 28px;
}
.heading{
    height: 77px;
    display: flex;
    align-items: flex-start;
}
.heading h1{
    margin-top: 27px;
    color: #23282d;
    font-size: 27px;
    font-weight: 400;
    line-height: 34px;
}
.button{
    display: inline-flex;
    align-items: center;
    justify-content: center;
    height: 34px;
    padding: 0 10px;
    border: 1px solid #0071a1;
    border-radius: 3px;
    background-color: #f3f5f6;
    color: #0071a1;
    font-size: 16px;
    text-decoration: none;
}
.heading .button{
    margin: 27px 0 0 11px;
    font-weight: 500;
}
.screen-meta{
    margin-left: auto;
    display: flex;
    gap: 9px;
}
.screen-meta button{
    height: 38px;
    display: flex;
    align-items: center;
    gap: 8px;
    padding: 0 18px;
    border: 1px solid #ccd0d4;
    border-top: none;
    border-radius: 0 0 4px 4px;
    background-color: #fff;
    color: #72777c;
    font-size: 16px;
}
.screen-meta svg{
    width: 10px;
    height: 10px;
}
.columns{
    display: flex;
    align-items: flex-start;
    gap: 26px;
}
.main-column{
    flex: 1;
    min-width: 0;
}
.side-column{
    flex: none;
    width: 348px;
    padding-top: 1px;
}
.post-title{
    display: block;
    width: 100%;
    height: 49px;
    padding: 0 10px;
    border: 1px solid #007cba;
    border-radius: 5px;
    box-shadow: 0 0 0 1px #007cba;
    background-color: #fff;
    font-size: 26px;
}
.permalink{
    display: flex;
    align-items: center;
    gap: 4px;
    margin-top: 10px;
    padding-left: 12px;
}
.permalink a{
    font-size: 16px;
}
.permalink b{
    font-weight: 500;
}
.button.small{
    height: 32px;
    font-size: 14px;
}

/* divi */
.divi-bar{
    display: flex;
    align-items: center;
    margin: 37px 0 24px;
    padding-right: 25px;
}
.divi-button{
    height: 51px;
    padding: 0 12px;
    margin-right: 25px;
    border-radius: 3px;
    background-color: #e1e2e4;
    color: #5a6066;
    font-size: 18px;
    font-weight: 600;
}
.divi-button.blue{
    background-color: #c9dbec;
    color: #2ea3da;
}
.views{
    display: flex;
    gap: 30px;
    margin-left: auto;
    padding: 10px 25px 10px 0;
    border-right: 1px solid #c3c6c9;
    color: #9a9ea2;
}
.views .on{
    color: #50575f;
}
.helpers{
    display: flex;
    gap: 12px;
    margin-left: 26px;
}
.helpers button{
    width: 28px;
    height: 28px;
    display: flex;
    align-items: center;
    justify-content: center;
    border-radius: 50%;
    background-color: #9fa3a5;
    color: #fff;
    font-size: 18px;
    font-weight: 700;
}
.helpers .icon{
    width: 15px;
    height: 15px;
}
.builder{
    margin-bottom: 25px;
    border-radius: 3px;
    background-color: #fff;
    box-shadow: 0 5px 30px rgba(0,0,0,0.1);
}
.builder-head{
    height: 71px;
    display: flex;
    align-items: center;
    padding: 0 43px 0 32px;
    border-radius: 3px 3px 0 0;
    background-color: #6c2eb9;
    color: #fff;
}
.divi-logo{
    width: 36px;
    height: 36px;
    border: 3px solid #fff;
    border-radius: 50%;
    font-size: 22px;
    font-weight: 600;
    line-height: 30px;
    text-align: center;
}
.builder-head h2{
    margin-left: 19px;
    font-size: 22px;
    font-weight: 600;
}
.builder-tools{
    display: flex;
    align-items: center;
    gap: 42px;
    margin-left: auto;
}
.builder-tools .thin{
    width: 14px;
    margin: 0 3px;
}
.builder-tools .dots{
    width: 8px;
}
.builder-body{
    padding: 38px 38px 43px 37px;
}
.block{
    position: relative;
    border-radius: 3px;
}
.block-head{
    height: 50px;
    display: grid;
    grid-template-columns: 1fr auto 1fr;
    align-items: center;
    padding: 0 16px;
    border-radius: 3px 3px 0 0;
    color: #fff;
    font-size: 18px;
    font-weight: 600;
}
.tools{
    display: flex;
    align-items: center;
    gap: 15px;
}
.tools .icon{
    width: 20px;
    height: 18px;
}
.tools .dots{
    width: 6px;
}
.toggle{
    justify-self: end;
}
.section{
    padding-bottom: 49px;
    background-color: #f6f8f9;
}
.section > .block-head{
    background-color: #2b87da;
}
.row{
    margin: 38px 37px 0;
    padding-bottom: 82px;
    background-color: #fff;
}
.row > .block-head{
    background-color: #29c4a9;
}
.module{
    padding: 37px 37px 0;
}
.module .block-head{
    border-radius: 3px;
    background-color: #4c5866;
}
.add{
    position: absolute;
    left: 50%;
    width: 38px;
    height: 38px;
    margin-left: -19px;
    display: flex;
    align-items: center;
    justify-content: center;
    border-radius: 50%;
    box-shadow: 0 4px 14px rgba(43,135,218,0.2);
    color: #fff;
}
.add .icon{
    width: 14px;
    height: 14px;
}
.add-module{
    bottom: 31px;
    background-color: #4c5866;
}
.add-row{
    bottom: -19px;
    background-color: #29c4a9;
}
.add-section{
    bottom: -19px;
    background-color: #2b87da;
}

/* meta boxes */
.box{
    border: 1px solid #ccd0d4;
    background-color: #fff;
    margin-bottom: 26px;
}
.box-head{
    height: 47px;
    display: flex;
    align-items: center;
    padding: 0 17px 0 15px;
    border-bottom: 1px solid #ccd0d4;
    color: #72777c;
}
.box-head.light{
    border-color: #eee;
}
.box-head h2{
    flex: 1;
    color: #23282d;
    font-size: 17px;
    font-weight: 500;
}
.box-head .icon{
    width: 20px;
    height: 20px;
    margin-left: 9px;
}
.box-head .faded{
    color: #a9adb1;
}
.fold svg{
    display: block;
    width: 10px;
    height: 10px;
    margin-left: 22px;
}
.box-body{
    padding: 15px;
}
textarea, input[type="text"], select{
    border: 1px solid #7e8993;
    border-radius: 4px;
    background-color: #fff;
}
.excerpt textarea{
    display: block;
    width: 100%;
    height: 70px;
}
.excerpt p{
    margin-top: 17px;
    line-height: 24px;
}
.fields{
    padding-top: 7px;
}
.fields table{
    width: 100%;
    table-layout: fixed;
    border: 1px solid #ddd;
    border-collapse: separate;
    border-spacing: 0;
    background-color: #f9f9f9;
}
.fields th{
    height: 37px;
    padding: 0;
    background-color: #f1f1f1;
    font-weight: 600;
    font-size: 16px;
}
.fields .name{
    width: 38%;
}
.fields td{
    padding: 12px 11px 0;
    vertical-align: top;
}
.fields input{
    width: 99%;
    height: 38px;
    padding: 0 10px;
    font-size: 16px;
}
.value{
    position: relative;
    width: 98%;
}
.fields textarea{
    display: block;
    width: 100%;
    height: 70px;
    padding: 2px 28px 2px 8px;
    line-height: 24px;
    font-size: 17px;
    resize: none;
}
.value-scroll{
    position: absolute;
    top: 1px;
    right: 1px;
    bottom: 1px;
    width: 20px;
    display: flex;
    flex-direction: column;
    align-items: center;
    gap: 7px;
    padding-top: 6px;
    background-color: #f1f1f1;
}
.value-thumb{
    flex: 1;
    width: 100%;
    background-color: #c1c1c1;
}

/* divi page settings */
.settings{
    padding: 18px 15px 31px;
}
.settings label{
    display: block;
    line-height: 24px;
    font-weight: 700;
}
.settings select{
    display: block;
    height: 37px;
    margin: 5px 0 18px;
    padding: 0 32px 0 10px;
    appearance: none;
    background: #fff url('data:image/svg+xml,<svg xmlns="http://www.w3.org/2000/svg" viewBox="0 0 14 14"><path d="M1 4l6 6 6-6" fill="none" stroke="%23555" stroke-width="2"/></svg>') right 10px center / 14px no-repeat;
    font-size: 16px;
}
.settings select:last-child{
    margin-bottom: 0;
}

/* blog2social */
.b2s{
    position: relative;
    padding-top: 10px;
}
.b2s p{
    font-size: 17px;
    line-height: 24px;
}
.b2s p a{
    font-size: 15px;
}
.b2s strong{
    font-weight: 500;
    color: #32373c;
}
.b2s .red{
    color: #dc143c;
}
.b2s-button{
    width: 100%;
    height: 41px;
    margin: 8px 0 23px;
    border-radius: 5px;
    background-color: #2e78b7;
    color: #fff;
    font-size: 14px;
}
.shared{
    height: 70px;
    margin-top: 9px;
    padding: 12px;
    background-color: #79b232;
    color: #fff;
    line-height: 23px;
}
.cursor{
    position: absolute;
    left: 121px;
    top: 98px;
    width: 10px;
    height: 24px;
}

/* publish */
.publish{
    display: flex;
    flex-direction: column;
    gap: 17px;
    padding: 12px 12px 7px;
}
.preview{
    align-self: flex-end;
    height: 35px;
    padding: 0 14px;
    font-size: 15px;
}
.publish p{
    padding-right: 20px;
    line-height: 25px;
}
.publish .icon{
    display: inline-block;
    width: 22px;
    height: 22px;
    margin-right: 10px;
    vertical-align: -5px;
    color: #82878c;
}
.publish strong{
    font-weight: 600;
}
.publish-actions{
    height: 68px;
    display: flex;
    align-items: center;
    justify-content: space-between;
    padding: 0 12px;
    background-color: #f5f5f5;
}
.trash{
    color: #b32d2e;
}
.update{
    height: 38px;
    padding: 0 15px;
    border-radius: 3px;
    background-color: #007cba;
    color: #fff;
    font-size: 16px;
}

/* categories */
.categories{
    padding-top: 10px;
}
.tabs{
    display: flex;
}
.tabs a{
    height: 33px;
    padding: 4px 13px;
    text-decoration: none;
}
.tabs .selected{
    position: relative;
    margin-bottom: -1px;
    padding: 4px 7px;
    border: 1px solid #ddd;
    border-bottom: none;
    background-color: #fdfdfd;
    color: #32373c;
}
.tab-panel{
    height: 200px;
    padding: 22px 15px;
    border: 1px solid #ddd;
    background-color: #fdfdfd;
}
.tab-panel label{
    display: flex;
    align-items: center;
    gap: 10px;
}
.tab-panel input{
    appearance: none;
    width: 17px;
    height: 17px;
    margin: 0;
    border: 1px solid #7e8993;
    border-radius: 4px;
    background: #fff url('data:image/svg+xml,<svg xmlns="http://www.w3.org/2000/svg" viewBox="0 0 14 14"><path d="M2 7l4 4 6-8" fill="none" stroke="%231e8cbe" stroke-width="3"/></svg>') center / 13px no-repeat;
}
```
